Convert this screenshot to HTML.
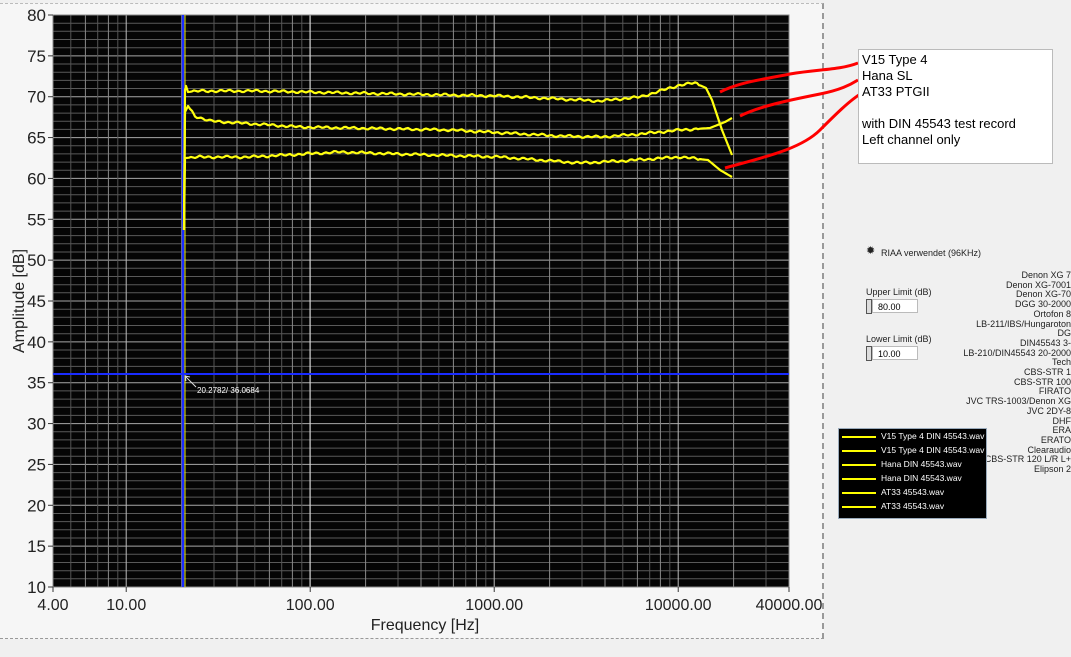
<!DOCTYPE html>
<html><head><meta charset="utf-8"><style>
body{margin:0;width:1071px;height:657px;background:#f0f0f0;overflow:hidden;font-family:"Liberation Sans",sans-serif;position:relative}
.panel{position:absolute;left:0;top:3px;width:822px;height:634px;background:#f6f6f6;border-top:1px dashed #bbb;border-right:2px dashed #999;border-bottom:1px dashed #999}
.box{position:absolute;left:858px;top:49px;width:195px;height:115px;background:#fff;border:1px solid #bbb;font-size:13px;line-height:16px;padding:2px 3px;box-sizing:border-box;color:#000}
.small{position:absolute;font-size:9px;color:#222}
.inp{position:absolute;width:46px;height:14px;background:#fff;border:1px solid #bbb;font-size:9px;line-height:14px;padding-left:5px;box-sizing:border-box}
.spin{position:absolute;width:4px;height:13px;border:1px solid #555;background:#ddd}
.legend{position:absolute;left:838px;top:428px;width:147px;height:89px;background:#000;border:1px solid #9ab}
.legend div{height:14px;font-size:8.5px;color:#fff;line-height:14px;position:relative;padding-left:42px}
.legend div:before{content:"";position:absolute;left:3px;top:7px;width:34px;height:2px;background:#ff0}
.list{position:absolute;right:0;top:271px;text-align:right;font-size:9px;line-height:9.7px;color:#222;white-space:nowrap}
</style></head><body>
<div class="panel"></div>
<svg id="s" width="1071" height="657" style="position:absolute;left:0;top:0"></svg>
<div class="box">V15 Type 4<br>Hana SL<br>AT33 PTGII<br><br>with DIN 45543 test record<br>Left channel only</div>
<div class="small" style="left:866px;top:244px;font-size:11px">&#10041;</div>
<div class="small" style="left:881px;top:248px">RIAA verwendet (96KHz)</div>
<div class="small" style="left:866px;top:287px">Upper Limit (dB)</div>
<div class="spin" style="left:866px;top:299px"></div><div class="inp" style="left:872px;top:299px">80.00</div>
<div class="small" style="left:866px;top:334px">Lower Limit (dB)</div>
<div class="spin" style="left:866px;top:346px"></div><div class="inp" style="left:872px;top:346px">10.00</div>
<div class="list">Denon XG 7<br>Denon XG-7001<br>Denon XG-70<br>DGG 30-2000<br>Ortofon 8<br>LB-211/IBS/Hungaroton<br>DG<br>DIN45543 3-<br>LB-210/DIN45543 20-2000<br>Tech<br>CBS-STR 1<br>CBS-STR 100<br>FIRATO<br>JVC TRS-1003/Denon XG<br>JVC 2DY-8<br>DHF<br>ERA<br>ERATO<br>Clearaudio<br>CBS-STR 120 L/R L+<br>Elipson 2</div>
<div class="legend"><div>V15 Type 4 DIN 45543.wav</div><div>V15 Type 4 DIN 45543.wav</div><div>Hana DIN 45543.wav</div><div>Hana DIN 45543.wav</div><div>AT33 45543.wav</div><div>AT33 45543.wav</div></div>
<script>
var s='',L=53,R=789,T=15,B=587;
function X(f){return L+184*Math.log10(f/4)}
function Y(v){return T+(80-v)*572/70}
s+='<rect x="'+L+'" y="'+T+'" width="'+(R-L)+'" height="'+(B-T)+'" fill="#050505"/>';
for(var v=10;v<=80;v++){var y=Y(v).toFixed(1);s+='<line x1="'+L+'" x2="'+R+'" y1="'+y+'" y2="'+y+'" stroke="'+(v%5?'#5a5a5a':'#a8a8a8')+'" stroke-width="1"/>';}
for(var d=1;d<=10000;d*=10)for(var m=1;m<10;m++){var f=d*m;if(f<=4||f>=40000)continue;var x=X(f).toFixed(1);s+='<line y1="'+T+'" y2="'+B+'" x1="'+x+'" x2="'+x+'" stroke="'+(m==1?'#bbb':(m%2?'#555':'#8a8a8a'))+'" stroke-width="1"/>';}
s+='<line x1="310" x2="310" y1="'+T+'" y2="'+B+'" stroke="#ddd"/>';
s+='<rect x="'+L+'" y="'+T+'" width="'+(R-L)+'" height="'+(B-T)+'" fill="none" stroke="#888"/>';
[80,75,70,65,60,55,50,45,40,35,30,25,20,15,10].forEach(function(v){var y=Y(v);s+='<line x1="48" x2="53" y1="'+y+'" y2="'+y+'" stroke="#333"/><text x="46" y="'+(y+6)+'" text-anchor="end" font-size="17" fill="#222" font-family="Liberation Sans">'+v+'</text>';});
[[4,'4.00'],[10,'10.00'],[100,'100.00'],[1000,'1000.00'],[10000,'10000.00'],[40000,'40000.00']].forEach(function(a){var x=X(a[0]);s+='<line x1="'+x+'" x2="'+x+'" y1="587" y2="592" stroke="#333"/><text x="'+x+'" y="610" text-anchor="middle" font-size="16" fill="#222" font-family="Liberation Sans">'+a[1]+'</text>';});
s+='<text x="425" y="630" text-anchor="middle" font-size="16" fill="#222" font-family="Liberation Sans">Frequency [Hz]</text>';
s+='<text transform="translate(24,301) rotate(-90)" text-anchor="middle" font-size="16" fill="#222" font-family="Liberation Sans">Amplitude [dB]</text>';
function curve(pts,seed){var out=[];for(var i=0;i<pts.length-1;i++){var a=pts[i],b=pts[i+1];for(var x=a[0];x<b[0];x+=2){var t=(x-a[0])/(b[0]-a[0]);var y=a[1]+(b[1]-a[1])*t+(x>190&&x<700?0.9*Math.sin(x*0.7+seed)+0.5*Math.sin(x*0.23+seed*3):0);out.push(x.toFixed(1)+','+y.toFixed(1));}}var l=pts[pts.length-1];out.push(l[0]+','+l[1]);return '<polyline points="'+out.join(' ')+'" fill="none" stroke="#ffff10" stroke-width="2.2" stroke-linejoin="round"/>';}
s+='<line x1="183" x2="183" y1="'+T+'" y2="'+B+'" stroke="#1a2cff" stroke-width="2.5"/>';
s+='<line x1="185" x2="185" y1="'+T+'" y2="'+B+'" stroke="#ee0" stroke-width="1"/>';
s+=curve([[184,230],[185,90],[186,86],[188,92],[200,91],[260,91],[350,93],[500,96],[560,99],[600,101],[640,97],[680,85],[695,83],[706,88],[712,100],[722,130],[732,155]],1);
s+=curve([[184,230],[185,112],[188,106],[195,116],[210,121],[300,127],[450,130],[560,136],[600,137],[640,134],[680,130],[710,128],[725,122],[732,118]],2);
s+=curve([[184,230],[185,158],[200,157],[250,157],[340,152],[400,154],[500,157],[580,163],[620,161],[680,157],[708,160],[720,170],[732,177]],3);
s+='<line x1="'+L+'" x2="'+R+'" y1="374" y2="374" stroke="#1a2cff" stroke-width="2"/>';
s+='<path d="M185 376 L196 387 M185 376 l1 5 M185 376 l5 1" stroke="#ddd" fill="none"/>';
s+='<text x="197" y="393" font-size="8" fill="#fff" font-family="Liberation Sans">20.2782/ 36.0684</text>';
s+='<path d="M720 92 C740 82 760 80 790 74 C820 69 840 70 858 63" stroke="#f00" stroke-width="3" fill="none"/>';
s+='<path d="M740 116 C760 106 790 100 820 94 C840 90 850 85 858 80" stroke="#f00" stroke-width="3" fill="none"/>';
s+='<path d="M725 168 C760 158 800 150 820 130 C835 115 850 100 862 93" stroke="#f00" stroke-width="3" fill="none"/>';
document.getElementById('s').innerHTML=s;
</script>
</body></html>
